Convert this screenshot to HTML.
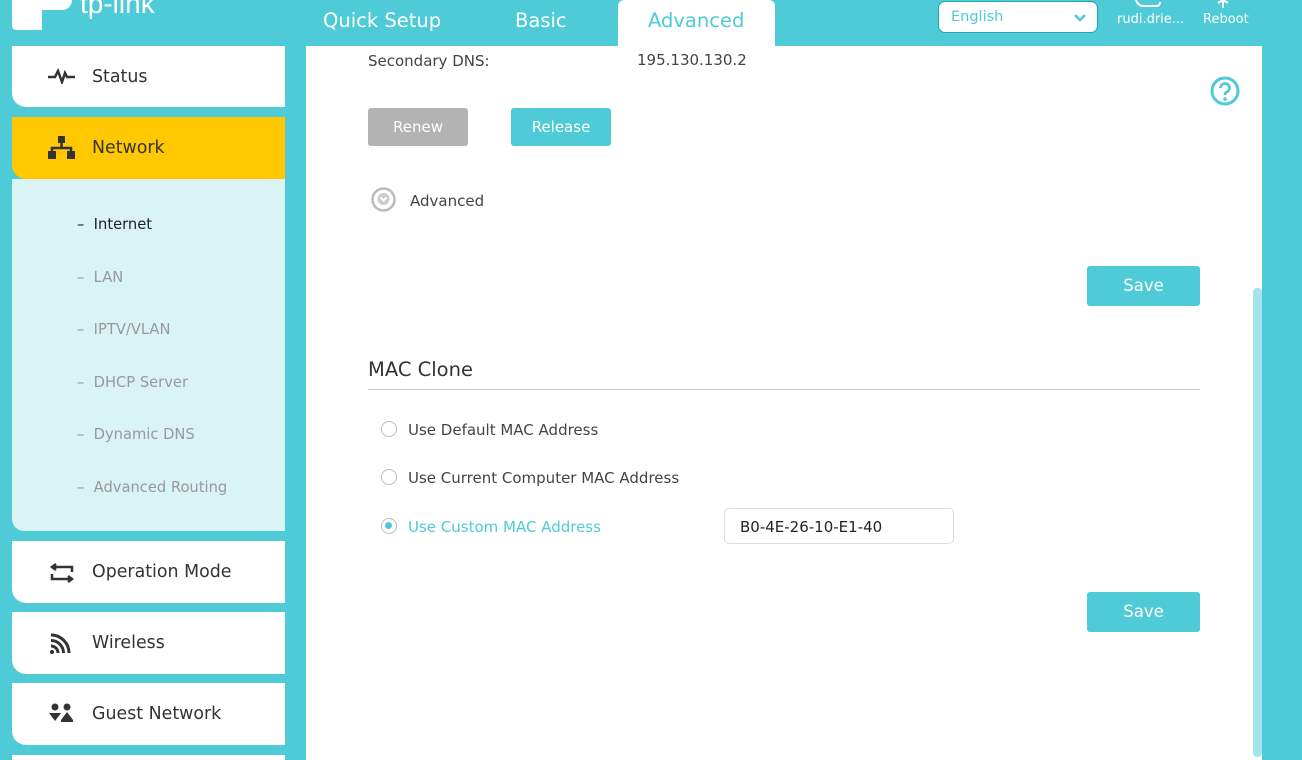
<!DOCTYPE html>
<html><head><meta charset="utf-8"><style>
*{margin:0;padding:0;box-sizing:border-box}
html,body{width:1302px;height:760px;overflow:hidden}
body{background:#4ecbd6;font-family:"DejaVu Sans","Liberation Sans",sans-serif;position:relative;color:#333}
.a{position:absolute}
.tab{position:absolute;top:9px;font-size:19.5px;color:#fff}
.side{position:absolute;left:12px;width:273px;background:#fff;border-radius:0 0 0 14px}
.side .t{position:absolute;left:80px;font-size:17.4px;color:#333}
.side svg{position:absolute;left:36px}
.sub{position:absolute;left:77px;font-size:14.7px;color:#999}
.btn{position:absolute;height:38px;border-radius:3px;color:#fff;font-size:15px;text-align:center;line-height:38px}
.lbl{position:absolute;font-size:15px;color:#444}
.radio{position:absolute;left:381px;width:16px;height:16px;border:1.5px solid #bbb;border-radius:50%}
</style></head><body>
<!-- logo -->
<div class="a" style="left:12px;top:-10px;width:30px;height:40px;background:#fff;border-radius:0 0 0 4px"></div>
<div class="a" style="left:12px;top:-10px;width:60px;height:20px;background:#fff;border-radius:0 10px 10px 0"></div>
<div class="a" style="left:80px;top:-12px;font-size:28px;color:#fff;font-family:'Liberation Sans',sans-serif">tp-link</div>
<div class="tab" style="left:323px">Quick Setup</div>
<div class="tab" style="left:515px">Basic</div>
<div class="a" style="left:618px;top:0;width:157px;height:50px;background:#fff;border-radius:6px 6px 0 0"></div>
<div class="tab" style="left:648px;color:#4ecbd6">Advanced</div>
<div class="a" style="left:938px;top:1px;width:160px;height:32px;border:1px solid #1aa8b3;background:#fff;border-radius:7px"></div>
<div class="a" style="left:951px;top:9px;font-size:14.5px;color:#4ecbd6">English</div>
<svg class="a" style="left:1073px;top:13px" width="14" height="10"><path d="M2 2l5 5 5-5" stroke="#4ecbd6" stroke-width="2.5" fill="none"/></svg>
<div class="a" style="left:1117px;top:12px;font-size:13px;color:#fff">rudi.drie...</div>
<div class="a" style="left:1203px;top:12px;font-size:13px;color:#fff">Reboot</div>
<svg class="a" style="left:1133px;top:0" width="30" height="8"><path d="M3 0q2 6 8 6h12q4 0 4-4" stroke="#fff" stroke-width="2" fill="none"/></svg>
<svg class="a" style="left:1215px;top:0" width="16" height="8"><path d="M8 0v8M3 3l5-3 5 3" stroke="#fff" stroke-width="2" fill="none"/></svg>

<!-- content -->
<div class="a" style="left:306px;top:46px;width:956px;height:714px;background:#fff"></div>
<div class="a" style="left:1253px;top:288px;width:9px;height:469px;background:#a5e4ea;border-radius:4px"></div>
<svg class="a" style="left:1209px;top:75px" width="32" height="32"><circle cx="16" cy="16" r="13" stroke="#4ecbd6" stroke-width="3" fill="none"/><path d="M11.5 13a4.5 4.5 0 1 1 6 4.2c-1.2.5-1.5 1.3-1.5 2.8" stroke="#4ecbd6" stroke-width="2.8" fill="none"/><circle cx="16" cy="24" r="1.8" fill="#4ecbd6"/></svg>
<div class="lbl" style="left:368px;top:52px">Secondary DNS:</div>
<div class="lbl" style="left:637px;top:51px">195.130.130.2</div>
<div class="btn" style="left:368px;top:108px;width:100px;background:#b3b3b3">Renew</div>
<div class="btn" style="left:511px;top:108px;width:100px;background:#4ecbd6">Release</div>
<svg class="a" style="left:370px;top:186px" width="27" height="27"><circle cx="13.5" cy="13.5" r="11" stroke="#bbb" stroke-width="2.5" fill="none"/><circle cx="13.5" cy="13" r="6" fill="#ccc"/><path d="M10.5 11.5l3 3 3-3" stroke="#fff" stroke-width="2" fill="none"/></svg>
<div class="lbl" style="left:410px;top:192px">Advanced</div>
<div class="btn" style="left:1087px;top:266px;width:113px;height:40px;line-height:40px;background:#4ecbd6;font-size:16.5px">Save</div>
<div class="a" style="left:368px;top:358px;font-size:19.5px;color:#333">MAC Clone</div>
<div class="a" style="left:368px;top:389px;width:832px;height:1px;background:#ccc"></div>
<div class="radio" style="top:421px"></div>
<div class="lbl" style="left:408px;top:421px">Use Default MAC Address</div>
<div class="radio" style="top:469px"></div>
<div class="lbl" style="left:408px;top:469px">Use Current Computer MAC Address</div>
<div class="radio" style="top:518px"><div style="position:absolute;left:3px;top:3px;width:7px;height:7px;border-radius:50%;background:#4ecbd6"></div></div>
<div class="lbl" style="left:408px;top:518px;color:#4ecbd6">Use Custom MAC Address</div>
<div class="a" style="left:724px;top:508px;width:230px;height:36px;border:1px solid #ddd;border-radius:5px"></div>
<div class="lbl" style="left:740px;top:518px;color:#222">B0-4E-26-10-E1-40</div>
<div class="btn" style="left:1087px;top:592px;width:113px;height:40px;line-height:40px;background:#4ecbd6;font-size:16.5px">Save</div>

<!-- sidebar -->
<div class="side" style="top:46px;height:61px">
<svg style="top:22px" width="28" height="16"><path d="M0 9h7l3-6 4 11 3-9 2 4h8" stroke="#333" stroke-width="2.5" fill="none"/></svg>
<div class="t" style="top:21px">Status</div></div>
<div class="side" style="top:117px;height:62px;background:#ffc800">
<svg style="top:19px" width="28" height="24"><rect x="10" y="0" width="7" height="7" fill="#333"/><path d="M13.5 7v5M4 17v-5h19v5" stroke="#333" stroke-width="2.5" fill="none"/><rect x="0" y="15" width="8" height="8" fill="#333"/><rect x="19" y="15" width="8" height="8" fill="#333"/></svg>
<div class="t" style="top:21px">Network</div></div>
<div class="a" style="left:12px;top:179px;width:273px;height:352px;background:#daf3f5;border-radius:0 0 0 12px"></div>
<div class="sub" style="top:216px;color:#222">–&nbsp; Internet</div>
<div class="sub" style="top:269px">–&nbsp; LAN</div>
<div class="sub" style="top:321px">–&nbsp; IPTV/VLAN</div>
<div class="sub" style="top:374px">–&nbsp; DHCP Server</div>
<div class="sub" style="top:426px">–&nbsp; Dynamic DNS</div>
<div class="sub" style="top:479px">–&nbsp; Advanced Routing</div>
<div class="side" style="top:541px;height:62px">
<svg style="top:20px" width="28" height="24"><path d="M8 3l-4 3 4 3M4 6h20v5M20 21l4-3-4-3M24 18H4v-5" stroke="#333" stroke-width="2.5" fill="none"/></svg>
<div class="t" style="top:21px">Operation Mode</div></div>
<div class="side" style="top:612px;height:62px">
<svg style="top:19px" width="28" height="24"><path d="M3 4a18 18 0 0 1 18 18M3 9.5a12.5 12.5 0 0 1 12.5 12.5M3 15a7 7 0 0 1 7 7" stroke="#333" stroke-width="3" fill="none"/><circle cx="4" cy="21" r="2" fill="#333"/></svg>
<div class="t" style="top:21px">Wireless</div></div>
<div class="side" style="top:683px;height:62px">
<svg style="top:20px" width="28" height="22"><circle cx="7" cy="4" r="3.5" fill="#333"/><circle cx="19" cy="4" r="3.5" fill="#333"/><path d="M1 10l6 8 6-8zM13 17l6-8 6 8v2h-12z" fill="#333"/></svg>
<div class="t" style="top:21px">Guest Network</div></div>
<div class="side" style="top:755px;height:20px"></div>
</body></html>
